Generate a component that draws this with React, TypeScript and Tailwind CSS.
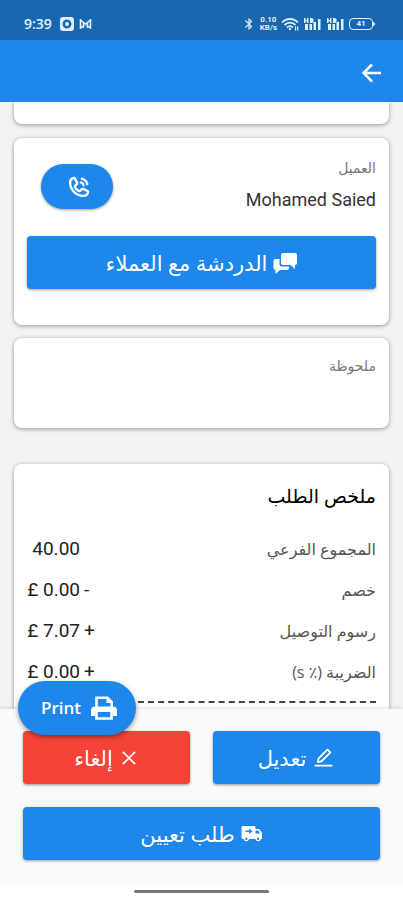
import type { ReactNode } from 'react';
import { AiOutlineClose, AiOutlineEdit } from 'react-icons/ai';
import { MdBluetooth } from 'react-icons/md';
import { PiPhoneCallBold } from 'react-icons/pi';

const rows = [
  { label: 'المجموع الفرعي', value: '40.00', sign: '' },
  { label: 'خصم', value: '£ 0.00', sign: '-' },
  { label: 'رسوم التوصيل', value: '£ 7.07', sign: '+' },
  { label: 'الضريبة (٪ s)', value: '£ 0.00', sign: '+' },
];

function Signal() {
  return (
    <svg width="19" height="14" viewBox="0 0 19 14" fill="currentColor" aria-hidden="true">
      <path d="M1 1h1.500v2H4V1h1.500v5H4V4.200H2.500V6H1zM7 1h2l1.500 1.300v2.400L9 6H7zM2 7h3v6H2zM6.500 7h2.500v6H6.500zM10.500 5h2.500v8h-2.500zM15 2h2.500v11H15z" />
    </svg>
  );
}

function WifiIcon() {
  return (
    <svg width="18" height="14" viewBox="0 0 18 14" fill="none" stroke="currentColor" strokeWidth="1.8" aria-hidden="true">
      <path d="M1 5.500C5.500.8 12.500.8 17 5.500M3.500 8c3.200-3.200 7.800-3.200 11 0M6 10.500c1.800-1.700 4.200-1.700 6 0" />
      <circle cx="9" cy="12" r="1.200" fill="currentColor" stroke="none" />
      <path d="M14.500 9.500v4M16.700 9.500v4" strokeWidth="1.200" />
    </svg>
  );
}

function BackArrow() {
  return (
    <svg width="22" height="22" viewBox="0 0 22 22" fill="none" stroke="currentColor" strokeWidth="2.5" aria-hidden="true">
      <path d="M20 11H3M11 2.500 2.500 11l8.500 8.500" />
    </svg>
  );
}

function ChatsIcon() {
  return (
    <svg width="24" height="22" viewBox="0 0 24 22" fill="currentColor" aria-hidden="true">
      <path d="M10 1h12a2 2 0 0 1 2 2v8a2 2 0 0 1-2 2v4l-4.500-4H10a2 2 0 0 1-2-2V3a2 2 0 0 1 2-2z" />
      <path d="M6.500 7H2.500a2 2 0 0 0-2 2v7a2 2 0 0 0 2 2v4l4.500-4h7a2 2 0 0 0 2-2v-1.500H9a2.500 2.500 0 0 1-2.500-2.500z" />
    </svg>
  );
}

function TruckIcon() {
  return (
    <svg width="22" height="18" viewBox="0 0 22 18" fill="currentColor" fillRule="evenodd" aria-hidden="true">
      <path d="M2 1h11a1.500 1.500 0 0 1 1.500 1.500V4H18l3 4v6h-1.200a2.700 2.700 0 0 1-5.300 0H8a2.700 2.700 0 0 1-5.300 0H2a1.500 1.500 0 0 1-1.500-1.500v-10A1.500 1.500 0 0 1 2 1zm12.500 4.500V8.500h4.700L17.200 5.500zM8 3.500v2H4.500v1.400H8v2l3.500-2.700zM5.400 12.500a1.200 1.200 0 1 0 0 2.400 1.200 1.200 0 0 0 0-2.400zm11.700 0a1.200 1.200 0 1 0 0 2.400 1.200 1.200 0 0 0 0-2.400z" />
    </svg>
  );
}

function PrinterIcon() {
  return (
    <svg width="26" height="24" viewBox="0 0 26 24" fill="none" stroke="currentColor" strokeWidth="2.6" aria-hidden="true">
      <path d="M5.500 12V1.800H16.500l4.200 4.200v6" />
      <path d="M15.500 1v6h6z" fill="currentColor" stroke="none" />
      <path
        d="M4 10.500h18a4 4 0 0 1 4 4V20h-4.500v-4h-17v4H0v-5.500a4 4 0 0 1 4-4z"
        fill="currentColor"
        stroke="none"
      />
      <path d="M5.500 16v6.500h15V16" />
    </svg>
  );
}

function StatusBar() {
  return (
    <div dir="ltr" className="flex h-10 items-center justify-between bg-[#1867b1] pt-2 pr-7 pl-6 text-[#e3effa]">
      <div className="flex items-center gap-2">
        <span className="font-['Open_Sans',sans-serif] text-sm font-semibold">9:39</span>
        <svg width="35" height="16" viewBox="0 0 35 16" fill="currentColor" aria-hidden="true">
          <path fillRule="evenodd" d="M3 1h8a3 3 0 0 1 3 3v8a3 3 0 0 1-3 3H3a3 3 0 0 1-3-3V4a3 3 0 0 1 3-3zm4 2.500a4.500 4.500 0 1 0 0 9 4.500 4.500 0 0 0 0-9z" />
          <circle cx="7" cy="8" r="2" />
          <path d="M20.500 3v10M30.500 3v10M20.500 4l10 8M30.500 4l-10 8M23.500 7v5M27.500 7v5" stroke="currentColor" strokeWidth="1.600" fill="none" />
        </svg>
      </div>
      <div className="flex items-center gap-1">
        <MdBluetooth size={14} aria-hidden="true" />
        <span className="flex flex-col text-center font-['Roboto',sans-serif] text-[8px] leading-[8px] font-bold">
          <span>0.10</span>
          <span>KB/s</span>
        </span>
        <WifiIcon />
        <Signal />
        <Signal />
        <span className="flex items-center">
          <span className="flex h-3 w-6 items-center justify-center rounded border border-current font-['Roboto',sans-serif] text-[8px] leading-none font-bold">
            41
          </span>
          <span className="h-1 w-0.5 rounded-r bg-current" />
        </span>
      </div>
    </div>
  );
}

function ActionButton({ icon, tone, children }: { icon: ReactNode; tone: 'blue' | 'red'; children: ReactNode }) {
  return (
    <button
      type="button"
      className={`flex h-[53px] w-full items-center justify-center gap-1.5 rounded text-[21px] leading-8 font-normal text-white shadow-[0_1px_3px_rgba(0,0,0,0.4)] ${
        tone === 'blue' ? 'bg-[#1e87eb]' : 'bg-[#f54337]'
      }`}
    >
      {icon}
      <span>{children}</span>
    </button>
  );
}

const card = 'bg-white shadow-[0_1px_4px_rgba(0,0,0,0.4)]';

export default function App() {
  return (
    <div dir="rtl" className="flex min-h-screen flex-col bg-white font-['Open_Sans','DejaVu_Sans',sans-serif]">
      <StatusBar />
      <header className="z-10 flex h-[62px] items-center bg-[#1e87eb] px-5 pt-1">
        <button type="button" aria-label="رجوع" className="text-white">
          <BackArrow />
        </button>
      </header>

      <main className="flex grow flex-col bg-[#f3f3f3] px-3.5">
        <div className={`h-[22px] rounded-b-lg ${card}`} />

        <section className={`mt-3.5 h-[187px] rounded-lg px-[13px] pt-[18px] ${card}`}>
          <div className="flex justify-between">
            <div>
              <p className="text-sm leading-6 text-[#777]">العميل</p>
              <p dir="ltr" className="font-['Roboto',sans-serif] text-lg leading-10 text-[#333]">
                Mohamed Saied
              </p>
            </div>
            <button
              type="button"
              aria-label="اتصال"
              className="mt-2 ml-3.5 flex h-[45px] w-[72px] items-center justify-center rounded-full bg-[#1e87eb] pl-1 text-white shadow-[0_1px_3px_rgba(0,0,0,0.4)]"
            >
              <PiPhoneCallBold size={25} />
            </button>
          </div>
          <div className="mt-4">
            <ActionButton tone="blue" icon={<ChatsIcon />}>
              الدردشة مع العملاء
            </ActionButton>
          </div>
        </section>

        <section className={`mt-[13px] h-[90px] rounded-lg px-[13px] pt-4 ${card}`}>
          <p className="text-sm leading-6 text-[#777]">ملحوظة</p>
        </section>

        <section className={`mt-9 grow rounded-t-lg px-[13px] pt-4 ${card}`}>
          <h2 className="text-[19px] leading-8 font-medium text-black">ملخص الطلب</h2>
          <dl className="mt-4">
            {rows.map((row) => (
              <div key={row.label} className="flex h-[41px] items-center justify-between">
                <dt className="text-base text-[#555]">{row.label}</dt>
                <dd dir="ltr" className="flex w-[70px] gap-1 pt-0.5 font-['Roboto',sans-serif] text-[19px] text-[#222]">
                  <span className="w-[53px] text-right whitespace-nowrap">{row.value}</span>
                  <span>{row.sign}</span>
                </dd>
              </div>
            ))}
          </dl>
          <div className="mt-[9px] mb-1.5 border-t-2 border-dashed border-[#444]" />
        </section>
      </main>

      <footer className="relative z-10 bg-[#fafafa] px-[23px] pt-[22px] pb-[23px] shadow-[0_-1px_4px_rgba(0,0,0,0.12)]">
        <button
          type="button"
          dir="ltr"
          className="absolute -top-7 left-[18px] flex h-[54px] w-[118px] items-center justify-center gap-2.5 rounded-full bg-[#1e87eb] pl-1 text-[17px] font-semibold text-white shadow-[0_2px_5px_rgba(0,0,0,0.4)]"
        >
          Print
          <PrinterIcon />
        </button>
        <div className="grid grid-cols-2 gap-[23px]">
          <ActionButton tone="blue" icon={<AiOutlineEdit size={23} />}>
            تعديل
          </ActionButton>
          <ActionButton tone="red" icon={<AiOutlineClose size={20} />}>
            إلغاء
          </ActionButton>
        </div>
        <div className="mt-[23px]">
          <ActionButton tone="blue" icon={<TruckIcon />}>
            طلب تعيين
          </ActionButton>
        </div>
      </footer>
      <div className="flex h-[17px] items-center justify-center bg-white">
        <div className="h-[3px] w-1/3 rounded-full bg-[#777]" />
      </div>
    </div>
  );
}
